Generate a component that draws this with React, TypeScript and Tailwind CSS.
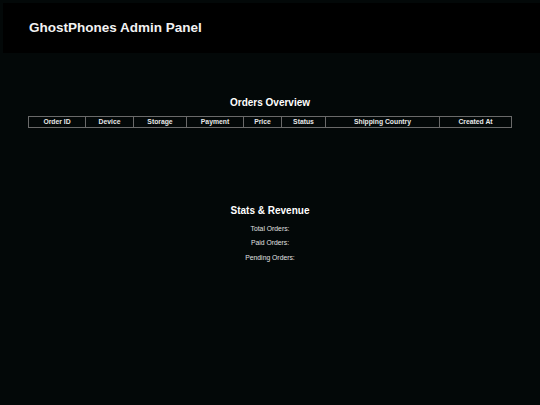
export default function App() {
  const cols: [string, number][] = [
    ["Order ID", 57],
    ["Device", 48],
    ["Storage", 53],
    ["Payment", 57],
    ["Price", 38],
    ["Status", 44],
    ["Shipping Country", 114],
    ["Created At", 72],
  ];
  return (
    <div className="w-[540px] h-[405px] bg-[#030808] text-white overflow-hidden pl-[3px] pt-[3px]" style={{ fontFamily: '"Liberation Sans", Arial, sans-serif' }}>
      <div className="h-[50px] bg-black flex items-center pl-[26px]">
        <h1 className="text-[13.5px] font-bold text-[#f2f2f2] leading-none">GhostPhones Admin Panel</h1>
      </div>
      <div className="flex flex-col items-center">
        <h2 className="mt-[45px] text-[10px] font-bold leading-none ml-[-3px]">Orders Overview</h2>
        <table className="mt-[8px] ml-[-3px] border border-[#7a7a7a] border-collapse table-fixed w-[483px]">
          <thead>
            <tr>
              {cols.map(([c, w]) => (
                <th key={c} style={{ width: w }} className="border border-[#6a6a6a] h-[11px] p-0 text-[6.8px] font-bold text-[#e8e8e8] leading-none text-center">
                  {c}
                </th>
              ))}
            </tr>
          </thead>
        </table>
        <h2 className="mt-[78px] text-[10px] font-bold leading-none ml-[-3px]">Stats & Revenue</h2>
        <div className="mt-[10px] flex flex-col items-center gap-[7.6px] text-[6.8px] text-[#e0e0e0] leading-none ml-[-3px]">
          <p>Total Orders:</p>
          <p>Paid Orders:</p>
          <p>Pending Orders:</p>
        </div>
      </div>
    </div>
  );
}
